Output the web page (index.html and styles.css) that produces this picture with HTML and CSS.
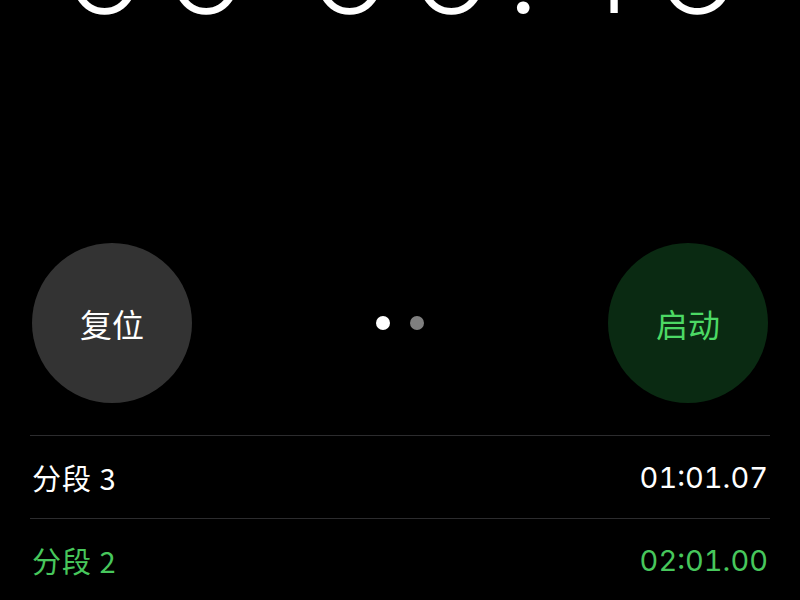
FILE: index.html
```html
<!DOCTYPE html>
<html lang="zh-CN">
<head>
<meta charset="utf-8">
<link rel="stylesheet" href="styles.css">
</head>
<body>
<div class="screen">
  <div class="timer">00<span class="colon">:</span>00.46</div>
  <div class="controls">
    <div class="btn btn-reset">复位</div>
    <div class="dots">
      <span class="dot dot-active"></span>
      <span class="dot"></span>
    </div>
    <div class="btn btn-start">启动</div>
  </div>
  <div class="laps">
    <div class="lap">
      <span class="lap-name">分段 3</span>
      <span class="lap-time">01:01.07</span>
    </div>
    <div class="lap lap-best">
      <span class="lap-name">分段 2</span>
      <span class="lap-time">02:01.00</span>
    </div>
  </div>
</div>
</body>
</html>
```

FILE: styles.css
```css
html, body {
  margin: 0;
  padding: 0;
  background: #000;
}
body {
  width: 800px;
  height: 600px;
  overflow: hidden;
  font-family: "Inter", "Noto Sans CJK SC", sans-serif;
  color: #fff;
}
.screen {
  display: flex;
  flex-direction: column;
}
.timer {
  font-size: 159px;
  font-weight: 200;
  line-height: 170px;
  height: 170px;
  margin-top: -130px;
  text-align: center;
  font-variant-numeric: tabular-nums;
  letter-spacing: -1px;
}
.colon {
  position: relative;
  top: -24px;
}
.controls {
  margin-top: 203px;
  padding: 0 32px;
  display: flex;
  align-items: center;
  justify-content: space-between;
}
.btn {
  width: 160px;
  height: 160px;
  border-radius: 50%;
  display: flex;
  align-items: center;
  justify-content: center;
  font-family: "Noto Sans CJK SC", sans-serif;
  font-size: 32px;
}
.btn-reset {
  background: #333333;
  color: #fff;
}
.btn-start {
  background: #0a2a12;
  color: #4cd964;
}
.dots {
  display: flex;
  gap: 20px;
}
.dot {
  width: 14px;
  height: 14px;
  border-radius: 50%;
  background: #7f7f7f;
}
.dot-active {
  background: #fff;
}
.laps {
  margin: 32px 30px 0;
}
.lap {
  height: 82px;
  border-top: 1px solid #2c2c2e;
  display: flex;
  align-items: center;
  justify-content: space-between;
  font-size: 29px;
  padding: 0 2px;
}
.lap-name {
  font-family: "Noto Sans CJK SC", sans-serif;
  letter-spacing: 1px;
}
.lap-time {
  font-variant-numeric: tabular-nums;
}
.lap-best {
  color: #47c75c;
}
```
